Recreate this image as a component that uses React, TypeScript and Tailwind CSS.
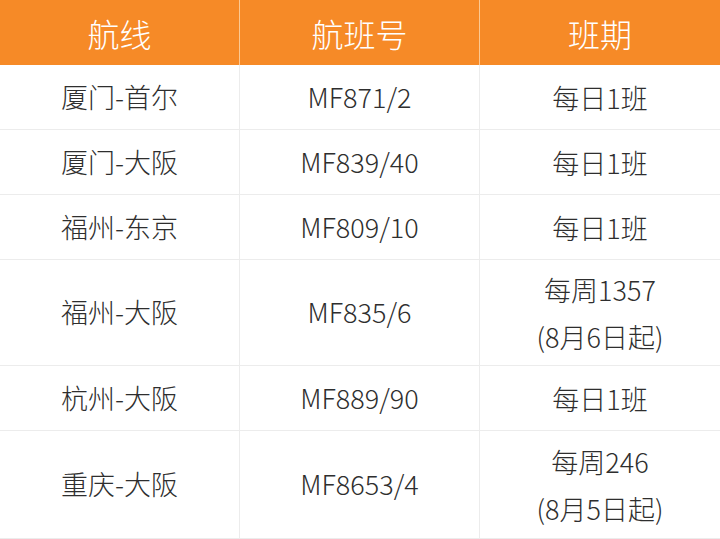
import React from "react";

const rows: { route: string; flight: string; sched: string[]; h: string }[] = [
  { route: "厦门-首尔", flight: "MF871/2", sched: ["每日1班"], h: "h-[65px]" },
  { route: "厦门-大阪", flight: "MF839/40", sched: ["每日1班"], h: "h-[65px]" },
  { route: "福州-东京", flight: "MF809/10", sched: ["每日1班"], h: "h-[65px]" },
  { route: "福州-大阪", flight: "MF835/6", sched: ["每周1357", "(8月6日起)"], h: "h-[106px]" },
  { route: "杭州-大阪", flight: "MF889/90", sched: ["每日1班"], h: "h-[65px]" },
  { route: "重庆-大阪", flight: "MF8653/4", sched: ["每周246", "(8月5日起)"], h: "h-[108px]" },
];

export default function App() {
  return (
    <div
      className="w-[720px] h-[539px] overflow-hidden bg-white"
      style={{ fontFamily: '"Noto Sans CJK SC", "Noto Sans", sans-serif' }}
    >
      <div className="grid grid-cols-[240px_240px_240px] h-[65px] bg-[#f68a27] text-white text-[32px] font-light">
        <div className="flex items-center justify-center border-r border-[#fbc892]">航线</div>
        <div className="flex items-center justify-center border-r border-[#fbc892]">航班号</div>
        <div className="flex items-center justify-center">班期</div>
      </div>
      {rows.map((r, i) => (
        <div
          key={i}
          className={`grid grid-cols-[240px_240px_240px] ${r.h} text-[27px] font-light text-[#2e2e2e] border-b border-[#ececec]`}
        >
          <div className="flex items-center justify-center border-r border-[#ececec]">{r.route}</div>
          <div className="flex items-center justify-center border-r border-[#ececec]">{r.flight}</div>
          <div className="flex flex-col items-center justify-center leading-[47px]">
            {r.sched.map((s, j) => (
              <div key={j}>{s}</div>
            ))}
          </div>
        </div>
      ))}
    </div>
  );
}
